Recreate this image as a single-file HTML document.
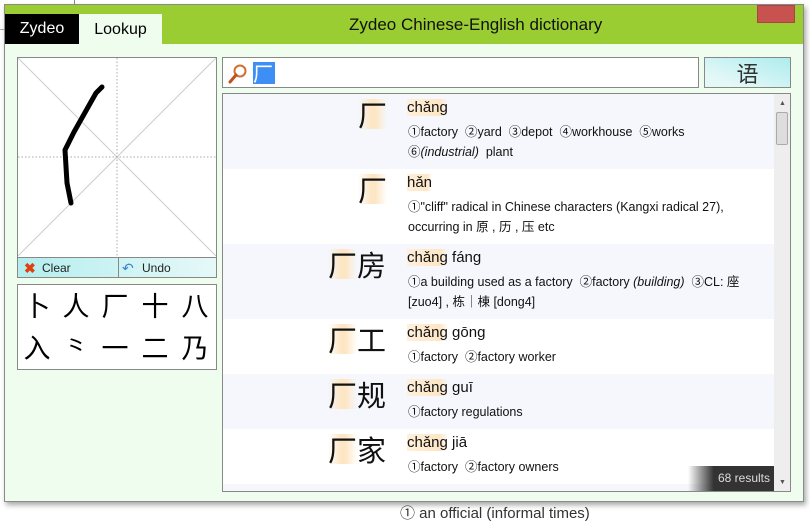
<!DOCTYPE html>
<html><head><meta charset="utf-8"><style>
*{margin:0;padding:0;box-sizing:border-box}
body{width:810px;height:511px;overflow:hidden;background:#fff;font-family:"Liberation Sans","Noto Sans CJK SC",sans-serif;position:relative}
.abs{position:absolute}
.win{left:4px;top:4px;width:800px;height:498px;background:#effdef;border:1px solid #8a8a8a;box-shadow:2px 3px 5px rgba(0,0,0,.35)}
.title{left:0;top:0;width:798px;height:39px;background:#9acd32}
.cjk{font-family:"Noto Sans CJK SC",sans-serif}
.row{position:absolute;left:0;width:551px}
.alt{background:#f5f7fc}
.hz{position:absolute;font-size:29px;line-height:30px;height:30px;color:#111;font-family:"Noto Sans CJK SC",sans-serif;white-space:nowrap}
.hz span{display:inline-block;height:30px;line-height:30px;vertical-align:top}
.hl{background:linear-gradient(90deg,rgba(255,255,255,0) 0%,#fde6c4 45%,#fde6c4 60%,rgba(255,255,255,0) 100%)}
.py{position:absolute;left:184px;font-size:15px;color:#111}
.py b{font-weight:normal;background:linear-gradient(90deg,#fff0dc,#fde6c4 80%,rgba(255,255,255,0))}
.sn{position:absolute;left:185px;font-size:12.5px;color:#111;line-height:20px;width:360px}
.cd{position:absolute;font-size:27px;line-height:34px;width:34px;text-align:center}
</style></head><body>
<div class="abs" style="left:0;top:0;width:75px;height:5px;border-right:1px solid #888"></div>
<div class="abs" style="left:0;top:29px;width:5px;height:1px;background:#aaa"></div>
<div class="abs" style="left:400px;top:502px;font-size:15px;color:#333">① an official (informal times)</div>
<div class="abs win">
 <div class="abs title"></div>
 <div class="abs" style="left:752px;top:0;width:38px;height:18px;background:#c85250;border:1px solid #a44"></div>
 <div class="abs" style="left:0;top:9px;width:74px;height:30px;background:#000;color:#fff;font-size:16px;line-height:30px;text-align:center">Zydeo</div>
 <div class="abs" style="left:74px;top:9px;width:83px;height:30px;background:#effdef;color:#000;font-size:16px;line-height:32px;text-align:center">Lookup</div>
 <div class="abs" style="left:344px;top:9px;font-size:17px;line-height:22px;color:#111">Zydeo Chinese-English dictionary</div>

 <div class="abs" style="left:12px;top:52px;width:200px;height:221px;border:1px solid #888;background:#fff">
  <svg width="198" height="198" style="position:absolute;left:0;top:0">
   <line x1="0" y1="0" x2="198" y2="198" stroke="#ccc"/><line x1="198" y1="0" x2="0" y2="198" stroke="#ccc"/>
   <line x1="99" y1="0" x2="99" y2="198" stroke="#aaa" stroke-dasharray="1.5 2"/><line x1="0" y1="99" x2="198" y2="99" stroke="#aaa" stroke-dasharray="1.5 2"/>
   <polyline points="84,29 78,35 56,74 47,92 49,125 53,145" fill="none" stroke="#000" stroke-width="5" stroke-linecap="round" stroke-linejoin="round"/>
  </svg>
  <div class="abs" style="left:0;top:199px;width:198px;height:20px;background:linear-gradient(90deg,#b4eeee,#e6f8f8);border-top:1px solid #888;font-size:12px;line-height:20px;color:#222">
   <span class="abs" style="left:6px;top:0;color:#e04010;font-weight:bold;font-size:14px">✖</span><span class="abs" style="left:24px">Clear</span>
   <span class="abs" style="left:100px;top:0;width:1px;height:20px;background:#888"></span>
   <span class="abs" style="left:104px;top:0;color:#3a7fd0;font-size:14px">↶</span><span class="abs" style="left:124px">Undo</span>
  </div>
 </div>
 <div class="abs cjk" style="left:12px;top:279px;width:200px;height:86px;border:1px solid #888;background:#fff;color:#000">
  <span class="cd" style="left:2px;top:3px">卜</span><span class="cd" style="left:41px;top:3px">人</span><span class="cd" style="left:80px;top:3px">厂</span><span class="cd" style="left:120px;top:3px">十</span><span class="cd" style="left:160px;top:3px">八</span>
  <span class="cd" style="left:2px;top:45px">入</span><span class="cd" style="left:41px;top:45px">⺀</span><span class="cd" style="left:80px;top:45px">一</span><span class="cd" style="left:120px;top:45px">二</span><span class="cd" style="left:160px;top:45px">乃</span>
 </div>

 <div class="abs" style="left:217px;top:52px;width:477px;height:31px;border:1px solid #888;background:#fff">
  <svg class="abs" style="left:5px;top:6px" width="20" height="20"><circle cx="12" cy="7" r="5.5" fill="#fff" stroke="#d07030" stroke-width="2"/><line x1="8" y1="11" x2="2" y2="18" stroke="#c05020" stroke-width="3" stroke-linecap="round"/></svg>
  <div class="abs cjk" style="left:30px;top:4px;width:22px;height:22px;background:#3d8ff5;color:#fff;font-size:20px;line-height:22px">厂</div>
 </div>
 <div class="abs cjk" style="left:699px;top:52px;width:87px;height:31px;border:1px solid #888;background:linear-gradient(200deg,#aeeced,#e4f8f8 80%);text-align:center;font-size:22px;line-height:30px;color:#333">语</div>

 <div class="abs" style="left:217px;top:88px;width:569px;height:399px;border:1px solid #888;background:#fff;overflow:hidden">
  <div class="row alt" style="top:0;height:75px">
   <div class="hz" style="left:135px;top:5px"><span class="hl">厂</span></div>
   <div class="py" style="top:5px"><b>chǎng</b></div>
   <div class="sn" style="top:28px">①factory &nbsp;②yard &nbsp;③depot &nbsp;④workhouse &nbsp;⑤works<br>⑥<i>(industrial)</i> &nbsp;plant</div>
  </div>
  <div class="row" style="top:75px;height:75px">
   <div class="hz" style="left:135px;top:5px"><span class="hl">厂</span></div>
   <div class="py" style="top:5px"><b>hǎn</b></div>
   <div class="sn" style="top:28px;width:350px">①"cliff" radical in Chinese characters (Kangxi radical 27), occurring in 原 , 历 , 压 etc</div>
  </div>
  <div class="row alt" style="top:150px;height:75px">
   <div class="hz" style="left:105px;top:5px"><span class="hl">厂</span><span>房</span></div>
   <div class="py" style="top:5px"><b>chǎng</b> fáng</div>
   <div class="sn" style="top:28px">①a building used as a factory &nbsp;②factory <i>(building)</i> &nbsp;③CL: 座 [zuo4] , 栋｜棟 [dong4]</div>
  </div>
  <div class="row" style="top:225px;height:55px">
   <div class="hz" style="left:105px;top:5px"><span class="hl">厂</span><span>工</span></div>
   <div class="py" style="top:5px"><b>chǎng</b> gōng</div>
   <div class="sn" style="top:28px">①factory &nbsp;②factory worker</div>
  </div>
  <div class="row alt" style="top:280px;height:55px">
   <div class="hz" style="left:105px;top:5px"><span class="hl">厂</span><span>规</span></div>
   <div class="py" style="top:5px"><b>chǎng</b> guī</div>
   <div class="sn" style="top:28px">①factory regulations</div>
  </div>
  <div class="row" style="top:335px;height:55px">
   <div class="hz" style="left:105px;top:5px"><span class="hl">厂</span><span>家</span></div>
   <div class="py" style="top:5px"><b>chǎng</b> jiā</div>
   <div class="sn" style="top:28px">①factory &nbsp;②factory owners</div>
  </div>
  <div class="row alt" style="top:390px;height:10px"></div>
  <div class="abs" style="left:465px;top:372px;width:86px;height:25px;background:linear-gradient(90deg,rgba(40,40,40,0),#333 30%);color:#ddd;font-size:12px;line-height:25px;text-align:right;padding-right:4px">68 results</div>
  <div class="abs" style="left:551px;top:0;width:16px;height:397px;background:#eee">
   <div class="abs" style="left:5px;top:6px;font-size:7px;color:#555">▲</div>
   <div class="abs" style="left:2px;top:18px;width:12px;height:33px;background:#ddd;border:1px solid #aaa;border-radius:2px"></div>
   <div class="abs" style="left:5px;top:385px;font-size:7px;color:#555">▼</div>
  </div>
 </div>
</div>
</body></html>
